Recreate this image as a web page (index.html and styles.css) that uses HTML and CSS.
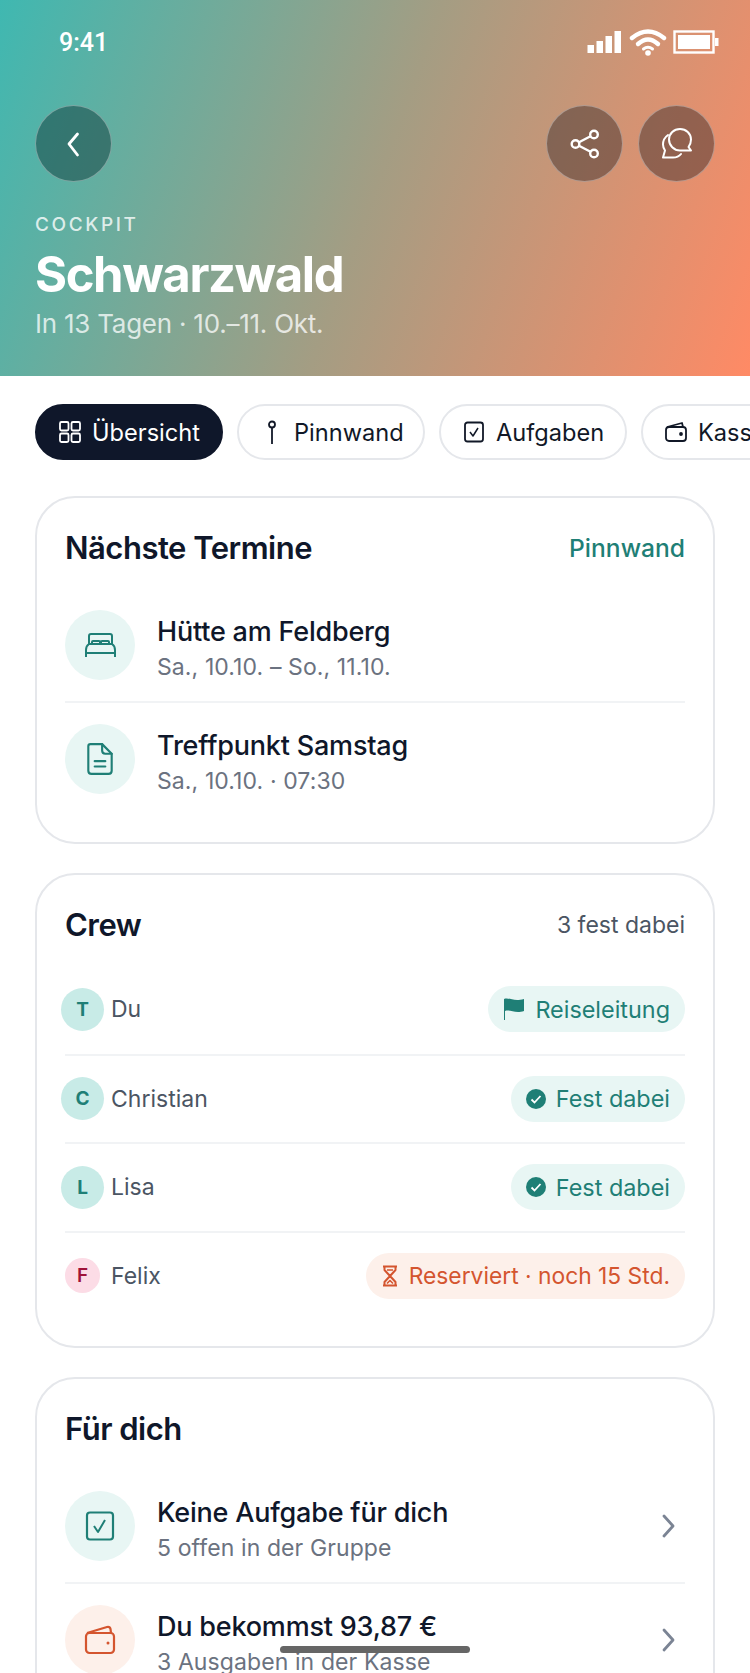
FILE: index.html
```html
<!DOCTYPE html>
<html lang="de">
<head>
  <meta charset="UTF-8" />
  <title>Schwarzwald Cockpit</title>
  <link rel="stylesheet" href="styles.css">
</head>
<body>
  <div class="screen">
    <header class="hero">
      <div class="status">
        <span class="time">9:41</span>
        <div class="status-icons">
          <svg width="36" height="24" viewBox="0 0 36 24" fill="#fff"><rect x="0.500" y="15" width="6.500" height="8"/><rect x="9.500" y="11" width="6.500" height="12"/><rect x="18.500" y="6" width="6.500" height="17"/><rect x="27.500" y="1" width="6.500" height="22"/></svg>
          <svg width="38" height="28" viewBox="0 0 38 28" fill="none" stroke="#fff" stroke-width="4.400" stroke-linecap="round"><path d="M3 10 Q19 -3 35 10"/><path d="M9 16 Q19 7 29 16"/><path d="M14.500 21 Q19 17.500 23.500 21" stroke-width="3"/><circle cx="19" cy="25" r="2.800" fill="#fff" stroke="none"/></svg>
          <svg width="46" height="24" viewBox="0 0 46 24"><rect x="1.500" y="1.500" width="39" height="21" fill="none" stroke="#fff" stroke-width="2.400"/><rect x="5" y="5" width="32" height="14" fill="#fff"/><rect x="42" y="8" width="3.500" height="8" fill="#fff"/></svg>
        </div>
      </div>
      <div class="hero-actions">
        <button class="round back">
          <svg width="30" height="30" viewBox="0 0 30 30" fill="none" stroke="#fff" stroke-width="2.800" stroke-linecap="round" stroke-linejoin="round"><path d="M18.500 5 L10 15 L18.500 26"/></svg>
        </button>
        <div class="action-group">
          <button class="round">
            <svg width="30" height="30" viewBox="0 0 30 30" fill="none" stroke="#fff" stroke-width="2.400"><circle cx="24" cy="5.500" r="3.800"/><circle cx="5.500" cy="15" r="3.800"/><circle cx="24" cy="24.500" r="3.800"/><path d="M9 13.200 L20.500 7.300 M9 16.800 L20.500 22.700"/></svg>
          </button>
          <button class="round chat">
            <svg width="30" height="31" viewBox="0 0 30 31" fill="none" stroke="#fff" stroke-width="2" stroke-linejoin="round" stroke-linecap="round"><path d="M18 1 C12 1 7 5.500 7 11.500 C7 17.500 12 22.500 18 22.500 H29 L26.500 19 C28 17 29 14.500 29 11.500 C29 5.500 24 1 18 1 Z"/><path d="M6 7 C2.500 9.500 1 13 1 16.500 C1 19 2 21 3 22.500 L1 29.500 H11 C14 29.500 17 28.500 19 26"/></svg>
          </button>
        </div>
      </div>
      <div class="eyebrow">COCKPIT</div>
      <h1>Schwarzwald</h1>
      <p class="hero-sub">In 13 Tagen · 10.–11. Okt.</p>
    </header>

    <nav class="tabs">
      <div class="tab active">
        <svg width="24" height="24" viewBox="0 0 24 24" fill="none" stroke="#fff" stroke-width="1.800"><rect x="2" y="2" width="8.500" height="8.500" rx="1.500"/><rect x="13.500" y="2" width="8.500" height="8.500" rx="1.500"/><rect x="2" y="13.500" width="8.500" height="8.500" rx="1.500"/><rect x="13.500" y="13.500" width="8.500" height="8.500" rx="1.500"/></svg>
        Übersicht
      </div>
      <div class="tab">
        <svg width="24" height="24" viewBox="0 0 24 24" fill="none" stroke="#111827" stroke-width="1.800"><circle cx="12" cy="4.500" r="3"/><path d="M12 7.500 V24"/></svg>
        Pinnwand
      </div>
      <div class="tab">
        <svg width="24" height="24" viewBox="0 0 24 24" fill="none" stroke="#111827" stroke-width="1.800" stroke-linejoin="round"><rect x="3" y="2.500" width="18" height="19" rx="2.500"/><path d="M8 12 L11 16 L16 8" stroke-width="1.500"/></svg>
        Aufgaben
      </div>
      <div class="tab">
        <svg width="24" height="24" viewBox="0 0 24 24" fill="none" stroke="#111827" stroke-width="1.800" stroke-linejoin="round"><path d="M3 7 L18 3 L19 7"/><rect x="2" y="7" width="20" height="14" rx="3"/><circle cx="17" cy="14" r="1" fill="#111827"/></svg>
        Kasse
      </div>
    </nav>

    <main class="cards">
      <section class="card">
        <div class="card-head">
          <h2>Nächste Termine</h2>
          <span class="head-link">Pinnwand</span>
        </div>
        <div class="row">
          <div class="row-icon teal">
            <svg width="31" height="24" viewBox="0 0 31 24" fill="none" stroke="#1f7f76" stroke-width="2" stroke-linejoin="round"><path d="M4 11 V3 Q4 1 6 1 H25 Q27 1 27 3 V11"/><path d="M7 11 V9 Q7 8 8 8 H14 Q15 8 15 9 V11 M16 11 V9 Q16 8 17 8 H23 Q24 8 24 9 V11"/><path d="M4 11 H27 Q30 13 30 17 V20 H1 V17 Q1 13 4 11 Z"/><path d="M1 20 V24 M30 20 V24"/></svg>
          </div>
          <div class="row-text">
            <div class="row-title">Hütte am Feldberg</div>
            <div class="row-sub">Sa., 10.10. – So., 11.10.</div>
          </div>
        </div>
        <div class="row">
          <div class="row-icon teal">
            <svg width="30" height="34" viewBox="0 0 28 32" fill="none" stroke="#1f7f76" stroke-width="2" stroke-linejoin="round" stroke-linecap="round"><path d="M5 2 H16 L25 11 V27 Q25 30 22 30 H6 Q3 30 3 27 V4 Q3 2 5 2 Z"/><path d="M16 2 V8 Q16 11 19 11 H25"/><path d="M9 18 H19 M9 23 H19"/></svg>
          </div>
          <div class="row-text">
            <div class="row-title">Treffpunkt Samstag</div>
            <div class="row-sub">Sa., 10.10. · 07:30</div>
          </div>
        </div>
      </section>

      <section class="card crew">
        <div class="card-head">
          <h2>Crew</h2>
          <span class="head-note">3 fest dabei</span>
        </div>
        <div class="member">
          <div class="who"><span class="avatar">T</span>Du</div>
          <span class="badge">
            <svg width="22" height="24" viewBox="0 0 22 24" fill="#1f7f76"><path d="M1 2 C6 0 10 5 21 2 V14 C12 17 7 12 2 14 V23 H1 Z"/></svg>
            Reiseleitung
          </span>
        </div>
        <div class="member">
          <div class="who"><span class="avatar">C</span>Christian</div>
          <span class="badge">
            <svg width="20" height="20" viewBox="0 0 20 20"><circle cx="10" cy="10" r="10" fill="#1f7f76"/><path d="M5.500 10.500 L8.500 13.500 L14.500 7" fill="none" stroke="#fff" stroke-width="1.800"/></svg>
            Fest dabei
          </span>
        </div>
        <div class="member">
          <div class="who"><span class="avatar">L</span>Lisa</div>
          <span class="badge">
            <svg width="20" height="20" viewBox="0 0 20 20"><circle cx="10" cy="10" r="10" fill="#1f7f76"/><path d="M5.500 10.500 L8.500 13.500 L14.500 7" fill="none" stroke="#fff" stroke-width="1.800"/></svg>
            Fest dabei
          </span>
        </div>
        <div class="member">
          <div class="who"><span class="avatar small">F</span>Felix</div>
          <span class="badge warn">
            <svg width="18" height="22" viewBox="0 0 18 22" fill="none" stroke="#d4552f" stroke-width="2" stroke-linejoin="round"><path d="M2 1.500 H16 M2 20.500 H16"/><path d="M3.500 1.500 V5 L9 11 L3.500 17 V20.500 M14.500 1.500 V5 L9 11 L14.500 17 V20.500"/><path d="M6 5 H12 M6 18.500 L9 15.500 L12 18.500" stroke-width="1.600"/></svg>
            Reserviert · noch 15 Std.
          </span>
        </div>
      </section>

      <section class="card">
        <div class="card-head">
          <h2>Für dich</h2>
        </div>
        <div class="row">
          <div class="row-icon teal">
            <svg width="30" height="30" viewBox="0 0 30 30" fill="none" stroke="#1f7f76" stroke-width="2.200" stroke-linejoin="round"><rect x="2" y="1.500" width="26" height="27" rx="3"/><path d="M9 15 L13 21 L20 9" stroke-width="2"/></svg>
          </div>
          <div class="row-text">
            <div class="row-title">Keine Aufgabe für dich</div>
            <div class="row-sub">5 offen in der Gruppe</div>
          </div>
          <svg class="chevron" width="16" height="24" viewBox="0 0 16 24" fill="none" stroke="#7b8494" stroke-width="2.800" stroke-linecap="round" stroke-linejoin="round"><path d="M3 2 L12 12 L3 22"/></svg>
        </div>
        <div class="row">
          <div class="row-icon orange">
            <svg width="32" height="30" viewBox="0 0 32 30" fill="none" stroke="#d4552f" stroke-width="2.200" stroke-linejoin="round"><path d="M3 8 L23 2 Q26 1.500 26.500 4 L27 8"/><rect x="2" y="8" width="28" height="20" rx="3.500"/><circle cx="24" cy="18" r="1.500" fill="#d4552f" stroke="none"/></svg>
          </div>
          <div class="row-text">
            <div class="row-title">Du bekommst 93,87 €</div>
            <div class="row-sub">3 Ausgaben in der Kasse</div>
          </div>
          <svg class="chevron" width="16" height="24" viewBox="0 0 16 24" fill="none" stroke="#7b8494" stroke-width="2.800" stroke-linecap="round" stroke-linejoin="round"><path d="M3 2 L12 12 L3 22"/></svg>
        </div>
      </section>
    </main>

    <div class="home-bar"></div>
  </div>
</body>
</html>
```

FILE: styles.css
```css
body {
  margin: 0;
  font-family: 'Inter', sans-serif;
  color: #0f172a;
  background: #fff;
}

.screen {
  position: relative;
  width: 750px;
  height: 1673px;
  overflow: hidden;
  background: #fff;
}

h1, h2, p {
  margin: 0;
}

.hero {
  height: 376px;
  box-sizing: border-box;
  padding: 0 35px;
  background: linear-gradient(110deg, #3fb8b1 0%, #a49d83 50%, #ff8a65 100%);
  color: #fff;
}

.status {
  display: flex;
  justify-content: space-between;
  align-items: center;
  height: 28px;
  padding: 28px 0 0 24px;
  margin-right: -4px;
}

.time {
  font-family: 'Roboto', sans-serif;
  font-size: 25px;
  font-weight: 500;
}

.status-icons {
  display: flex;
  align-items: center;
  gap: 6px;
}

.hero-actions {
  display: flex;
  justify-content: space-between;
  margin-top: 49px;
}

.action-group {
  display: flex;
  gap: 15px;
}

.round {
  display: flex;
  align-items: center;
  justify-content: center;
  width: 77px;
  height: 77px;
  padding: 0;
  border-radius: 50%;
  border: 1px solid rgba(255, 255, 255, 0.35);
  background: rgba(50, 40, 40, 0.45);
}

.round.back {
  background: rgba(15, 60, 60, 0.5);
}

.eyebrow {
  margin-top: 31px;
  font-size: 19px;
  font-weight: 500;
  letter-spacing: 2.6px;
  line-height: 24px;
  color: rgba(255, 255, 255, 0.8);
}

h1 {
  margin-top: 8px;
  font-size: 49px;
  font-weight: 700;
  letter-spacing: -1.4px;
  line-height: 60px;
}

.hero-sub {
  margin-top: 3px;
  font-size: 26px;
  letter-spacing: -0.24px;
  line-height: 32px;
  color: rgba(255, 255, 255, 0.75);
}

.tabs {
  display: flex;
  gap: 14px;
  padding: 28px 0 0 35px;
}

.tab {
  display: flex;
  align-items: center;
  flex: none;
  gap: 10px;
  width: 188px;
  height: 56px;
  box-sizing: border-box;
  padding-left: 21px;
  border: 2px solid #e5e7eb;
  border-radius: 28px;
  font-size: 23.600px;
  color: #111827;
}

.tab.active {
  background: #0f172a;
  border-color: #0f172a;
  color: #fff;
}

.cards {
  display: flex;
  flex-direction: column;
  gap: 29px;
  padding: 36px 35px 0;
}

.card {
  box-sizing: border-box;
  border: 2px solid #e5e7eb;
  border-radius: 40px;
  padding: 0 28px 28px;
  background: #fff;
}

.crew {
  padding-bottom: 27px;
}

.card-head {
  display: flex;
  justify-content: space-between;
  align-items: center;
  height: 90px;
  padding-top: 9px;
  box-sizing: border-box;
}

h2 {
  font-size: 31px;
  font-weight: 600;
  letter-spacing: -0.5px;
}

.head-link {
  font-size: 24.600px;
  font-weight: 500;
  color: #1f7f76;
}

.head-note {
  font-size: 23px;
  color: #4b5563;
}

.row {
  display: flex;
  align-items: center;
  gap: 22px;
  height: 113px;
  box-sizing: border-box;
}

.row + .row {
  border-top: 2px solid #f1f3f5;
}

.row-icon {
  display: flex;
  align-items: center;
  justify-content: center;
  flex: none;
  width: 70px;
  height: 70px;
  border-radius: 50%;
}

.teal {
  background: #e8f6f4;
}

.orange {
  background: #fdf0ea;
}

.row-text {
  flex: 1;
  padding-top: 8px;
}

.row-title {
  font-size: 27px;
  font-weight: 500;
  letter-spacing: -0.2px;
  line-height: 34px;
}

.row-sub {
  margin-top: 2px;
  font-size: 23px;
  letter-spacing: 0.1px;
  line-height: 32px;
  color: #6b7280;
}

.chevron {
  flex: none;
  margin-right: 8px;
}

.member {
  display: flex;
  justify-content: space-between;
  align-items: center;
  height: 88.500px;
  box-sizing: border-box;
}

.member + .member {
  border-top: 2px solid #f1f3f5;
}

.who {
  display: flex;
  align-items: center;
  gap: 7px;
  font-size: 23px;
  color: #4b5563;
}

.avatar {
  display: flex;
  align-items: center;
  justify-content: center;
  width: 43px;
  height: 43px;
  margin-left: -4px;
  border-radius: 50%;
  background: #c8ebe7;
  color: #1f7f76;
  font-size: 19px;
  font-weight: 700;
}

.avatar.small {
  width: 35px;
  height: 35px;
  margin: 0 4px 0 0;
  background: #fcdce6;
  color: #9f1239;
  font-weight: 600;
}

.badge {
  display: flex;
  align-items: center;
  gap: 10px;
  height: 46px;
  padding: 0 15px;
  border-radius: 23px;
  background: #e8f6f4;
  color: #1f7f76;
  font-size: 23.400px;
}

.badge.warn {
  background: #fdf0ea;
  color: #d4552f;
  font-size: 22.800px;
}

.home-bar {
  position: absolute;
  left: 280px;
  top: 1646px;
  width: 190px;
  height: 7px;
  border-radius: 4px;
  background: #666;
}
```
